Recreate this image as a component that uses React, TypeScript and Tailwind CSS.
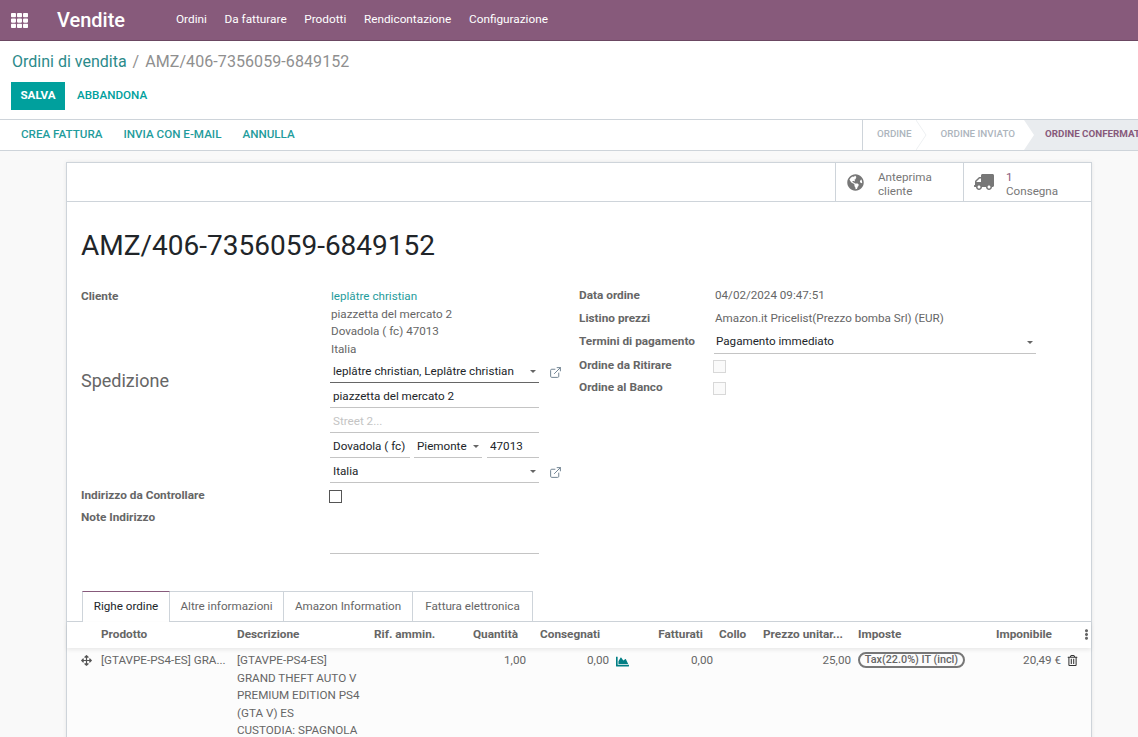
import type { ReactNode } from 'react';
import { ExternalLink } from 'lucide-react';
import { FaArrowsAlt, FaChartArea, FaEllipsisV, FaGlobeAmericas, FaRegTrashAlt, FaTh, FaTruck } from 'react-icons/fa';

const MENU = ['Ordini', 'Da fatturare', 'Prodotti', 'Rendicontazione', 'Configurazione'];
const TABS = [
  { name: 'Altre informazioni', width: 'w-[114px]' },
  { name: 'Amazon Information', width: 'w-[129px]' },
  { name: 'Fattura elettronica', width: 'w-[120px]' },
];
const COLS = 'grid grid-cols-[34px_136px_137px_70px_82px_104px_83px_42px_96px_124px_86px_30px]';

function Label({ children, className = '' }: { children: ReactNode; className?: string }) {
  return <div className={`text-[11.8px] font-bold text-[#666666] ${className}`}>{children}</div>;
}

function Field({ children, className = '', dark = false, caret = false }: { children?: ReactNode; className?: string; dark?: boolean; caret?: boolean }) {
  return (
    <div className={`flex h-[25px] items-center border-b pl-[3px] pt-[3px] text-[#212529] ${dark ? 'border-[#666666]' : 'border-[#c4c4c4]'} ${className}`}>
      <span className="flex-1 truncate">{children}</span>
      {caret && <span className="mr-[3px] h-0 w-0 border-x-[3.5px] border-t-[3.5px] border-x-transparent border-t-[#666666]" />}
    </div>
  );
}

function Ext() {
  return <ExternalLink className="ml-[10px] mt-[3px] size-[13px] shrink-0 text-[#6f8290]" strokeWidth={1.8} />;
}

export default function App() {
  return (
    <div className="h-[737px] w-[1138px] overflow-hidden bg-[#f9f9f9] font-['Roboto',sans-serif] text-[11.65px] text-[#666666]">
      <header className="flex h-[41px] items-center border-b border-[#6b4762] bg-[#875a7b] text-[11.8px] text-white">
        <FaTh className="ml-[11px] size-[17px]" />
        <div className="ml-[29px] w-[119px] text-[20px] font-medium">Vendite</div>
        <nav className="flex gap-[17.6px]">
          {MENU.map((m) => (
            <span key={m}>{m}</span>
          ))}
        </nav>
      </header>

      <div className="bg-white">
        <div className="flex h-[41px] items-center pl-3 pt-[1px] text-base">
          <span className="text-[#2b8a8a]">Ordini di vendita</span>
          <span className="ml-[6px] text-[#8f8f8f]">/</span>
          <span className="ml-[6px] tracking-[0.08px] text-[#8f8f8f]">AMZ/406-7356059-6849152</span>
        </div>
        <div className="flex h-[37px] items-start pl-[11px]">
          <button className="h-7 w-[54px] bg-[#00a09d] pb-[1px] font-bold text-white">SALVA</button>
          <span className="ml-3 mt-[5px] font-medium text-[#00a09d]">ABBANDONA</span>
        </div>
      </div>

      <div className="flex h-[32px] items-stretch border-y border-[#ced4da] bg-white">
        <div className="flex flex-1 items-center gap-[21px] pb-[1px] pl-[21px] font-medium text-[#1f9c9c]">
          <span>CREA FATTURA</span>
          <span>INVIA CON E-MAIL</span>
          <span>ANNULLA</span>
        </div>
        <div className="relative flex w-[276px] shrink-0 items-center overflow-hidden border-l border-[#ced4da] pb-[1px] text-[9.8px] font-medium whitespace-nowrap">
          <span className="ml-[14px] text-[#adb5bd]">ORDINE</span>
          <span className="ml-[29px] text-[#adb5bd]">ORDINE INVIATO</span>
          <svg className="absolute top-0 left-[53px] h-full w-[12px] text-[#eef0f2]" viewBox="0 0 12 30" fill="none" stroke="currentColor">
            <path d="M0 0 L10 15 L0 30" />
          </svg>
          <div className="absolute inset-y-0 left-[161px] flex w-[120px] items-center bg-[#e9ecef] pb-[1px] pl-[21px] font-bold text-[#875a7b] [clip-path:polygon(0_0,100%_0,100%_100%,0_100%,10px_50%)]">
            ORDINE CONFERMATO
          </div>
        </div>
      </div>

      <main className="ml-[66px] mt-[11px] h-[600px] w-[1026px] border border-[#ced4da] bg-white shadow-[0_0_4px_rgba(0,0,0,0.08)]">
        <div className="flex h-[39px] justify-end border-b border-[#ced4da]">
          <div className="flex w-[128px] items-center border-l border-[#ced4da]">
            <FaGlobeAmericas className="ml-[11px] size-[17px] text-[#777777]" />
            <div className="ml-[14px] pt-[3px] leading-[14px] text-[#777777]">
              Anteprima
              <br />
              cliente
            </div>
          </div>
          <div className="flex w-[128px] items-center border-l border-[#ced4da]">
            <FaTruck className="ml-[10px] size-[20px] -scale-x-100 text-[#777777]" />
            <div className="ml-[12px] pt-[3px] leading-[14px] text-[#777777]">
              <span className="text-[#875a7b]">1</span>
              <br />
              Consegna
            </div>
          </div>
        </div>

        <div className="px-[14px]">
          <h1 className="mt-[25px] h-[42px] text-[28px] leading-[38px] text-[#212529]">AMZ/406-7356059-6849152</h1>

          <div className="mt-[19px] flex h-[303px]">
            <div className="w-[498px] shrink-0">
              <div className="flex leading-[17.6px]">
                <Label className="w-[250px]">Cliente</Label>
                <div>
                  <div className="text-[#1f9c9c]">leplâtre christian</div>
                  <div>piazzetta del mercato 2</div>
                  <div>Dovadola ( fc) 47013</div>
                  <div>Italia</div>
                </div>
              </div>
              <div className="flex">
                <div className="w-[249px] pt-[9px] text-lg text-[#666666]">Spedizione</div>
                <div className="w-[232px]">
                  <div className="flex items-center">
                    <Field dark caret className="w-[209px] shrink-0">leplâtre christian, Leplâtre christian</Field>
                    <Ext />
                  </div>
                  <Field className="w-[209px]">piazzetta del mercato 2</Field>
                  <Field className="w-[209px] !text-[#c4c4c4]">Street 2...</Field>
                  <div className="flex w-[209px]">
                    <Field className="w-[80px]">Dovadola ( fc)</Field>
                    <Field caret className="ml-[4px] w-[68px]">Piemonte</Field>
                    <Field className="ml-[5px] w-[52px]">47013</Field>
                  </div>
                  <div className="flex items-center">
                    <Field caret className="w-[209px] shrink-0">Italia</Field>
                    <Ext />
                  </div>
                </div>
              </div>
              <div className="mt-[4px] flex items-center">
                <Label className="w-[248px]">Indirizzo da Controllare</Label>
                <span className="size-[13px] border border-[#555555] bg-white" />
              </div>
              <div className="mt-[4px] flex">
                <Label className="w-[249px]">Note Indirizzo</Label>
                <div className="h-[45px] w-[209px] border-b border-[#c4c4c4]" />
              </div>
            </div>

            <div className="-mt-[3px] w-[457px]">
              <div className="flex h-[22px] items-center">
                <Label className="w-[136px]">Data ordine</Label>
                <span>04/02/2024 09:47:51</span>
              </div>
              <div className="flex h-[24px] items-center">
                <Label className="w-[136px]">Listino prezzi</Label>
                <span>Amazon.it Pricelist(Prezzo bomba Srl) (EUR)</span>
              </div>
              <div className="flex h-[23px] items-start">
                <Label className="mt-[2px] w-[135px]">Termini di pagamento</Label>
                <Field caret className="!h-[23px] w-[322px] !pl-[2px] !pt-0">Pagamento immediato</Field>
              </div>
              <div className="flex h-[23px] items-center">
                <Label className="w-[134px]">Ordine da Ritirare</Label>
                <span className="mt-[2px] size-[13px] border border-[#d8d8d8] bg-[#fafafa]" />
              </div>
              <div className="flex h-[21px] items-center">
                <Label className="w-[134px]">Ordine al Banco</Label>
                <span className="mt-[2px] size-[13px] border border-[#d8d8d8] bg-[#fafafa]" />
              </div>
            </div>
          </div>
        </div>

        <div className="relative flex h-[31px] border-b border-[#ced4da] pl-[15px]">
          <div className="relative h-[31px] w-[88px] border-x border-t border-x-[#ced4da] border-t-[#875a7b] bg-white pt-[6px] text-center text-[#212529]">Righe ordine</div>
          {TABS.map((t) => (
            <div key={t.name} className={`h-[30px] border-t border-r border-[#ced4da] pt-[6px] text-center ${t.width}`}>
              {t.name}
            </div>
          ))}
        </div>

        <div className={`${COLS} relative h-[26px] items-center bg-white pb-[1px] text-[11.8px] font-bold shadow-[0_2px_4px_rgba(0,0,0,0.08)]`}>
          <span />
          <span>Prodotto</span>
          <span>Descrizione</span>
          <span>Rif. ammin.</span>
          <span className="pr-[8px] text-right">Quantità</span>
          <span className="pl-[14px]">Consegnati</span>
          <span className="pr-[10px] text-right">Fatturati</span>
          <span className="pl-[6px]">Collo</span>
          <span className="pl-[8px] whitespace-nowrap">Prezzo unitar...</span>
          <span className="pl-[7px]">Imposte</span>
          <span className="pr-[9px] text-right">Imponibile</span>
          <span className="pl-[20px]"><FaEllipsisV className="size-[11px]" /></span>
        </div>

        <div className={`${COLS} h-[130px] bg-[#fcfcfc] pt-[4px] leading-[17.6px]`}>
          <span className="flex justify-end pr-[9px] pt-[3px]"><FaArrowsAlt className="size-[11px] text-[#555555]" /></span>
          <span className="whitespace-nowrap">[GTAVPE-PS4-ES] GRA...</span>
          <div className="w-[128px]">
            [GTAVPE-PS4-ES]
            <br />
            GRAND THEFT AUTO V PREMIUM EDITION PS4 (GTA V) ES
            <br />
            CUSTODIA: SPAGNOLA
          </div>
          <span />
          <span className="text-right">1,00</span>
          <span className="flex items-start justify-end gap-[7px] pr-[1px]">
            0,00 <FaChartArea className="mt-[3px] size-[13px] text-[#017e84]" />
          </span>
          <span className="text-right">0,00</span>
          <span />
          <span className="text-right">25,00</span>
          <div className="pl-[7px]">
            <span className="block h-[16px] w-[107px] rounded-full border-2 border-[#777777] text-center text-[10.8px] leading-[12px] font-medium whitespace-nowrap">Tax(22.0%) IT (incl)</span>
          </div>
          <span className="text-right">20,49 €</span>
          <span className="flex pl-[6px] pt-[3px]"><FaRegTrashAlt className="size-[11px] text-[#333333]" /></span>
        </div>
      </main>
    </div>
  );
}
